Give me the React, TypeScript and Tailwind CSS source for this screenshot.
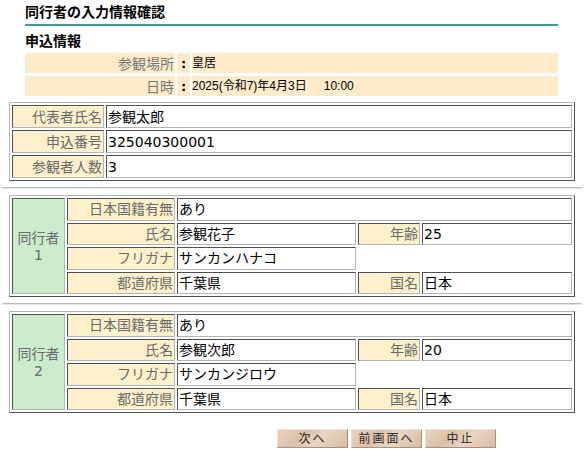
const inset = "border border-t-[#505050] border-l-[#505050] border-b-[#b4b4b4] border-r-[#b4b4b4]";
const outset = "border border-t-[#b4b4b4] border-l-[#b4b4b4] border-b-[#505050] border-r-[#505050]";

function Label({ children, className = "" }: { children?: React.ReactNode; className?: string }) {
  return (
    <div className={`${inset} bg-[#fdf1cb] text-[#6a6a6a] flex items-center justify-end pr-[1px] ${className}`}>
      {children}
    </div>
  );
}

function Value({ children, className = "" }: { children?: React.ReactNode; className?: string }) {
  return (
    <div className={`${inset} bg-white text-black flex items-center pl-[1px] ${className}`}>{children}</div>
  );
}

function Rule() {
  return <div className="mx-[2px] h-[2px] border-t border-t-[#b8bcc0] border-b border-b-[#e4e6e8]" />;
}

interface Companion {
  no: number;
  nationality: string;
  name: string;
  kana: string;
  age: string;
  pref: string;
  country: string;
}

function CompanionTable({ c }: { c: Companion }) {
  return (
    <div className={`${outset} mx-[9px] p-[2px]`}>
      <div className="grid grid-cols-[53px_108px_179px_62px_1fr] grid-rows-[repeat(4,22.5px)] gap-[2px] leading-none">
        <div className={`${inset} row-span-4 bg-[#cdebcd] text-[#6a6a6a] flex flex-col items-center justify-center gap-[3px]`}>
          <span>同行者</span>
          <span>{c.no}</span>
        </div>
        <Label>日本国籍有無</Label>
        <Value className="col-span-3">{c.nationality}</Value>
        <Label>氏名</Label>
        <Value>{c.name}</Value>
        <Label>年齢</Label>
        <Value>{c.age}</Value>
        <Label>フリガナ</Label>
        <Value>{c.kana}</Value>
        <div className="col-span-2" />
        <Label>都道府県</Label>
        <Value>{c.pref}</Value>
        <Label>国名</Label>
        <Value>{c.country}</Value>
      </div>
    </div>
  );
}

const companions: Companion[] = [
  { no: 1, nationality: "あり", name: "参観花子", kana: "サンカンハナコ", age: "25", pref: "千葉県", country: "日本" },
  { no: 2, nationality: "あり", name: "参観次郎", kana: "サンカンジロウ", age: "20", pref: "千葉県", country: "日本" },
];

function Btn({ children }: { children: React.ReactNode }) {
  return (
    <button className="w-[71px] h-[19px] flex items-center justify-center bg-[linear-gradient(135deg,#e9d2bd_0%,#dcc0a6_35%,#ead6c3_60%,#d9bca2_100%)] border border-t-[#f0e0d0] border-l-[#f0e0d0] border-b-[#a89080] border-r-[#a89080] text-[#2a2a2a] text-[12px] tracking-[2px] font-['Liberation_Serif','Noto_Sans_CJK_JP',serif] leading-none">
      {children}
    </button>
  );
}

export default function App() {
  return (
    <div className="w-[584px] h-[460px] bg-white text-[14px] font-['DejaVu_Sans','Noto_Sans_CJK_JP',sans-serif] overflow-hidden">
      <div className="ml-[25px] w-[533px]">
        <h1 className="pt-[3px] h-[24px] font-bold leading-[16px] text-[14px] font-['Noto_Sans_CJK_JP',sans-serif]">
          同行者の入力情報確認
        </h1>
        <div className="h-[2px] bg-[#3f9b97]" />
        <h2 className="mt-[6px] font-bold leading-[16px] text-[14px] font-['Noto_Sans_CJK_JP',sans-serif]">申込情報</h2>
        <div className="mt-[5px] grid grid-cols-[150px_13px_1fr] grid-rows-[20px_20px] gap-x-[2px] gap-y-[3px] leading-none">
          <div className="bg-[#fdebc9] text-[#777] flex items-center justify-end pr-[1px] font-['Noto_Sans_CJK_JP',sans-serif]">参観場所</div>
          <div className="bg-[#fdebc9] font-bold flex items-center justify-center text-[13px]">:</div>
          <div className="bg-[#fdebc9] flex items-center text-[12px] font-['Liberation_Sans','Noto_Sans_CJK_JP',sans-serif]">皇居</div>
          <div className="bg-[#fdebc9] text-[#777] flex items-center justify-end pr-[1px] font-['Noto_Sans_CJK_JP',sans-serif]">日時</div>
          <div className="bg-[#fdebc9] font-bold flex items-center justify-center text-[13px]">:</div>
          <div className="bg-[#fdebc9] flex items-center text-[12px] font-['Liberation_Sans','Noto_Sans_CJK_JP',sans-serif]">
            2025(令和7)年4月3日<span className="ml-[17px]">10:00</span>
          </div>
        </div>
      </div>

      <div className={`${outset} mx-[9px] mt-[6px] p-[2px]`}>
        <div className="grid grid-cols-[92px_1fr] grid-rows-[repeat(3,23px)] gap-[2px] leading-none">
          <Label>代表者氏名</Label>
          <Value>参観太郎</Value>
          <Label>申込番号</Label>
          <Value>325040300001</Value>
          <Label>参観者人数</Label>
          <Value>3</Value>
        </div>
      </div>

      {companions.map((c) => (
        <div key={c.no}>
          <div className="mt-[6px]">
            <Rule />
          </div>
          <div className="mt-[6px]">
            <CompanionTable c={c} />
          </div>
        </div>
      ))}

      <div className="flex gap-[3px] ml-[277px] mt-[16px]">
        <Btn>次へ</Btn>
        <Btn>前画面へ</Btn>
        <Btn>中止</Btn>
      </div>
    </div>
  );
}
